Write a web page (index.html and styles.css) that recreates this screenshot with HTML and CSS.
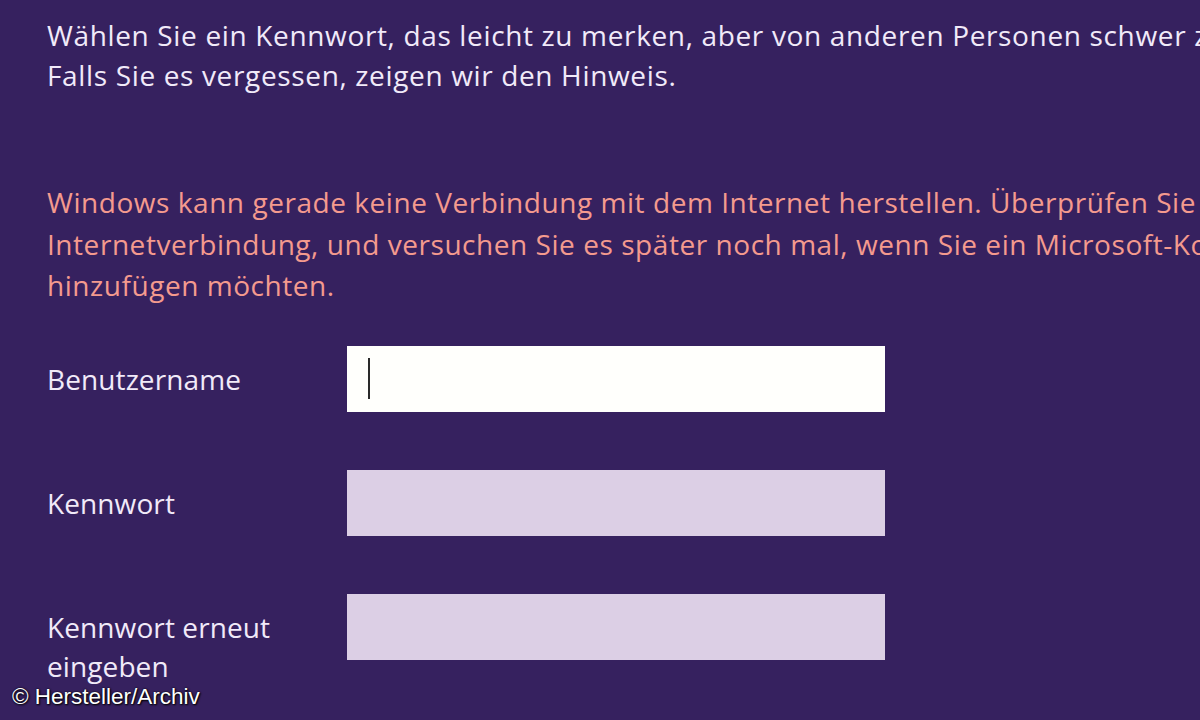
FILE: index.html
```html
<!DOCTYPE html>
<html lang="de">
<head>
<meta charset="utf-8">
<title>Konto hinzufügen</title>
<link rel="stylesheet" href="styles.css">
</head>
<body>
<main class="page">
  <p class="intro">Wählen Sie ein Kennwort, das leicht zu merken, aber von anderen Personen schwer zu erraten ist.<br>Falls Sie es vergessen, zeigen wir den Hinweis.</p>
  <p class="error">Windows kann gerade keine Verbindung mit dem Internet herstellen. Überprüfen Sie Ihre<br>Internetverbindung, und versuchen Sie es später noch mal, wenn Sie ein Microsoft-Konto<br>hinzufügen möchten.</p>
  <div class="form">
    <label class="label">Benutzername</label>
    <div class="field field-active"><span class="caret"></span></div>
    <label class="label">Kennwort</label>
    <div class="field"></div>
    <label class="label">Kennwort erneut<br>eingeben</label>
    <div class="field"></div>
  </div>
</main>
<div class="credit">© Hersteller/Archiv</div>
</body>
</html>
```

FILE: styles.css
```css
html, body {
  margin: 0;
  padding: 0;
  height: 100%;
}
body {
  background: #36215f;
  color: #f1eaf9;
  font-family: "Open Sans", "Noto Sans", "DejaVu Sans", sans-serif;
  overflow: hidden;
  position: relative;
  width: 1200px;
  height: 720px;
}
.page {
  padding: 15px 0 0 47px;
  white-space: nowrap;
  overflow: hidden;
}
.intro, .error {
  margin: 0;
  font-size: 28px;
  line-height: 40px;
}
.intro {
  color: #f1eaf9;
  letter-spacing: 0.65px;
}
.error {
  margin-top: 87px;
  color: #f49a8e;
  line-height: 41.5px;
  letter-spacing: 0.55px;
}
.form {
  margin-top: 39px;
  display: grid;
  grid-template-columns: 300px 538px;
  row-gap: 58px;
}
.label {
  font-size: 28px;
  line-height: 39px;
  padding-top: 14px;
  color: #f1eaf9;
  white-space: nowrap;
  letter-spacing: 0.1px;
}
.field {
  height: 66px;
  background: #dccfe5;
  position: relative;
}
.field-active {
  background: #fffffc;
}
.caret {
  position: absolute;
  left: 21px;
  top: 12px;
  width: 2px;
  height: 41px;
  background: #2a2a2a;
}
.credit {
  position: absolute;
  left: 12px;
  top: 683px;
  font-family: "Liberation Sans", Arial, sans-serif;
  font-size: 22.5px;
  line-height: 28px;
  color: #ffffff;
  text-shadow: 1px 1px 2px #000, 0 0 2px #000;
}
```
